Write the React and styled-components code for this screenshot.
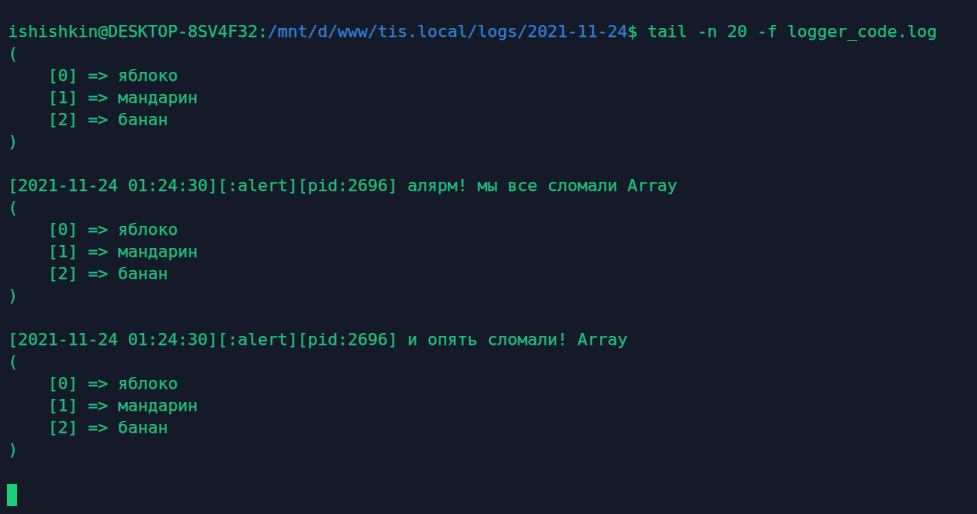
import React from "react";
import styled, { createGlobalStyle } from "styled-components";

const Global = createGlobalStyle`
  html, body { margin: 0; padding: 0; background: #151a29; }
  #root { min-height: 100vh; }
`;

const Terminal = styled.div`
  box-sizing: border-box;
  width: 977px;
  height: 514px;
  overflow: hidden;
  background: #151a29;
  padding: 21px 8px 0 8px;
  font-family: "DejaVu Sans Mono", "Liberation Mono", monospace;
  font-size: 16.6px;
  line-height: 22px;
  color: #1fba7b;
  -webkit-text-stroke: 0.25px currentColor;
  display: flex;
  flex-direction: column;
`;

const Line = styled.div`
  height: 22px;
  white-space: pre;
  padding-left: ${(p) => (p.$indent ? "40px" : "0")};
`;

const User = styled.span`
  color: #1fba7b;
`;

const Path = styled.span`
  color: #2f7ed0;
`;

const Cursor = styled.span`
  display: inline-block;
  width: 10px;
  height: 22px;
  margin-top: 1px;
  margin-left: -1px;
  background: #17cf7d;
`;

const fruits = ["яблоко", "мандарин", "банан"];

function ArrayDump() {
  return (
    <>
      <Line>(</Line>
      {fruits.map((f, i) => (
        <Line key={i} $indent>{`[${i}] => ${f}`}</Line>
      ))}
      <Line>)</Line>
      <Line> </Line>
    </>
  );
}

export default function App() {
  return (
    <>
      <Global />
      <Terminal>
        <Line>
          <User>ishishkin@DESKTOP-8SV4F32:</User>
          <Path>/mnt/d/www/tis.local/logs/2021-11-24</Path>
          <User>$ tail -n 20 -f logger_code.log</User>
        </Line>
        <ArrayDump />
        <Line>[2021-11-24 01:24:30][:alert][pid:2696] алярм! мы все сломали Array</Line>
        <ArrayDump />
        <Line>[2021-11-24 01:24:30][:alert][pid:2696] и опять сломали! Array</Line>
        <ArrayDump />
        <Line>
          <Cursor />
        </Line>
      </Terminal>
    </>
  );
}
